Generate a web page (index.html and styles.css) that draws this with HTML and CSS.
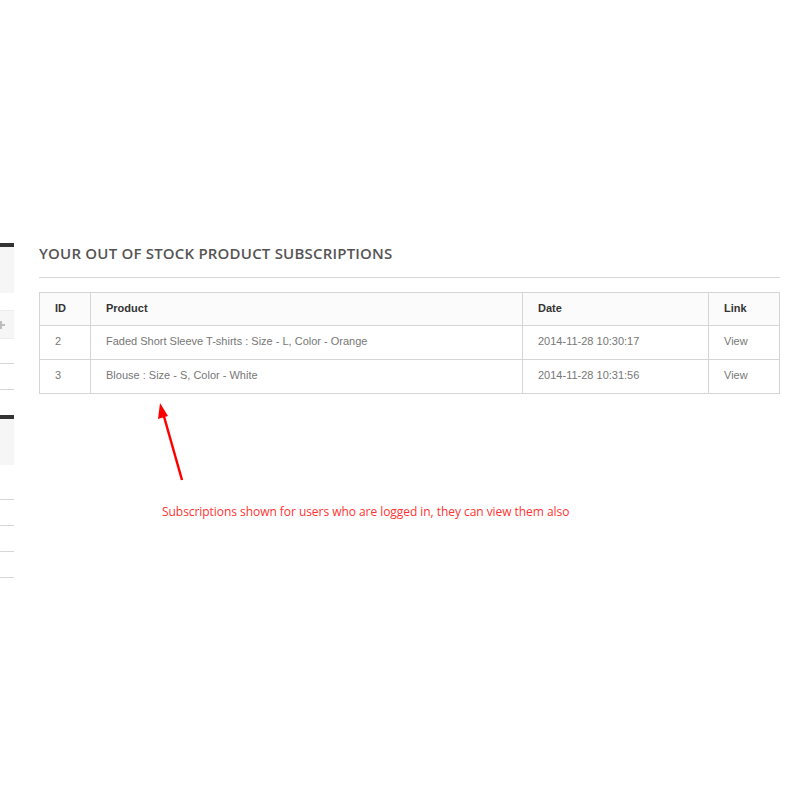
FILE: index.html
```html
<!DOCTYPE html>
<html lang="en">
<head>
  <meta charset="UTF-8">
  <title>Out of stock subscriptions</title>
  <link rel="stylesheet" href="styles.css">
</head>
<body>
  <div class="page">
    <aside class="sidebar">
      <div class="block">
        <div class="block-title"></div>
        <div class="toggle">
          <svg width="10" height="10" viewBox="0 0 10 10"><path d="M0 5h8M4 1v8" stroke="#bdbdbd" stroke-width="2"/></svg>
        </div>
        <div class="line"></div>
        <div class="line"></div>
      </div>
      <div class="block">
        <div class="block-title"></div>
        <div class="line first"></div>
        <div class="line"></div>
        <div class="line"></div>
        <div class="line"></div>
      </div>
    </aside>

    <main class="content">
      <h1 class="page-heading">Your out of stock product subscriptions</h1>

      <table class="subs">
        <thead>
          <tr>
            <th class="col-id">ID</th>
            <th class="col-product">Product</th>
            <th class="col-date">Date</th>
            <th class="col-link">Link</th>
          </tr>
        </thead>
        <tbody>
          <tr>
            <td>2</td>
            <td>Faded Short Sleeve T-shirts : Size - L, Color - Orange</td>
            <td>2014-11-28 10:30:17</td>
            <td><a href="#">View</a></td>
          </tr>
          <tr>
            <td>3</td>
            <td>Blouse : Size - S, Color - White</td>
            <td>2014-11-28 10:31:56</td>
            <td><a href="#">View</a></td>
          </tr>
        </tbody>
      </table>

      <div class="note">
        <svg class="arrow" width="40" height="90" viewBox="0 0 40 90">
          <line x1="29" y1="85" x2="10" y2="18" stroke="#f00" stroke-width="2.5"/>
          <polygon points="7,8 5,24 15,21" fill="#f00"/>
        </svg>
        <p>Subscriptions shown for users who are logged in, they can view them also</p>
      </div>
    </main>
  </div>
</body>
</html>
```

FILE: styles.css
```css
body {
  margin: 0;
  background-color: #fff;
  font-family: Arial, "Liberation Sans", sans-serif;
  color: #777;
}
.page {
  display: grid;
  grid-template-columns: 14px 1fr;
  column-gap: 25px;
  padding: 243px 20px 0 0;
}
.sidebar .block {
  margin-bottom: 1px;
}
.block-title {
  height: 46px;
  border-top: 4px solid #333;
  background-color: #f6f6f6;
}
.toggle {
  height: 27px;
  margin-top: 17px;
  margin-bottom: 24px;
  background-color: #f6f6f6;
  border-top: 1px solid #ececec;
  border-bottom: 1px solid #ececec;
  display: flex;
  align-items: center;
  overflow: hidden;
}
.toggle svg {
  margin-left: -3px;
}
.line {
  height: 1px;
  background-color: #d6d6d6;
  margin-bottom: 25px;
}
.line.first {
  margin-top: 34px;
}
.content {
  min-width: 0;
}
.page-heading {
  margin: 0 0 14px;
  padding-bottom: 14px;
  border-bottom: 1px solid #d6d6d6;
  font-family: "Open Sans", sans-serif;
  font-size: 15px;
  letter-spacing: 0.2px;
  line-height: 20px;
  font-weight: 600;
  text-transform: uppercase;
  color: #555454;
}
.subs {
  width: 100%;
  border-collapse: collapse;
  border: 1px solid #d6d4d4;
  font-size: 11px;
}
.subs th, .subs td {
  border: 1px solid #d6d4d4;
  padding: 0 15px 3px;
  height: 29px;
  text-align: left;
  vertical-align: middle;
}
.subs td {
  height: 30px;
}
.subs th {
  background-color: #fbfbfb;
  color: #333;
  font-weight: bold;
  font-size: 11px;
}
.subs td a {
  color: #777;
  text-decoration: none;
}
.col-id { width: 20px; }
.col-date { width: 155px; }
.col-link { width: 40px; }
.note {
  position: relative;
  padding: 110px 0 0 123px;
}
.note p {
  margin: 0;
  font-family: "Open Sans", sans-serif;
  font-size: 12px;
  line-height: 16px;
  letter-spacing: -0.05px;
  color: #f33;
}
.arrow {
  position: absolute;
  left: 114px;
  top: 1px;
}
```
